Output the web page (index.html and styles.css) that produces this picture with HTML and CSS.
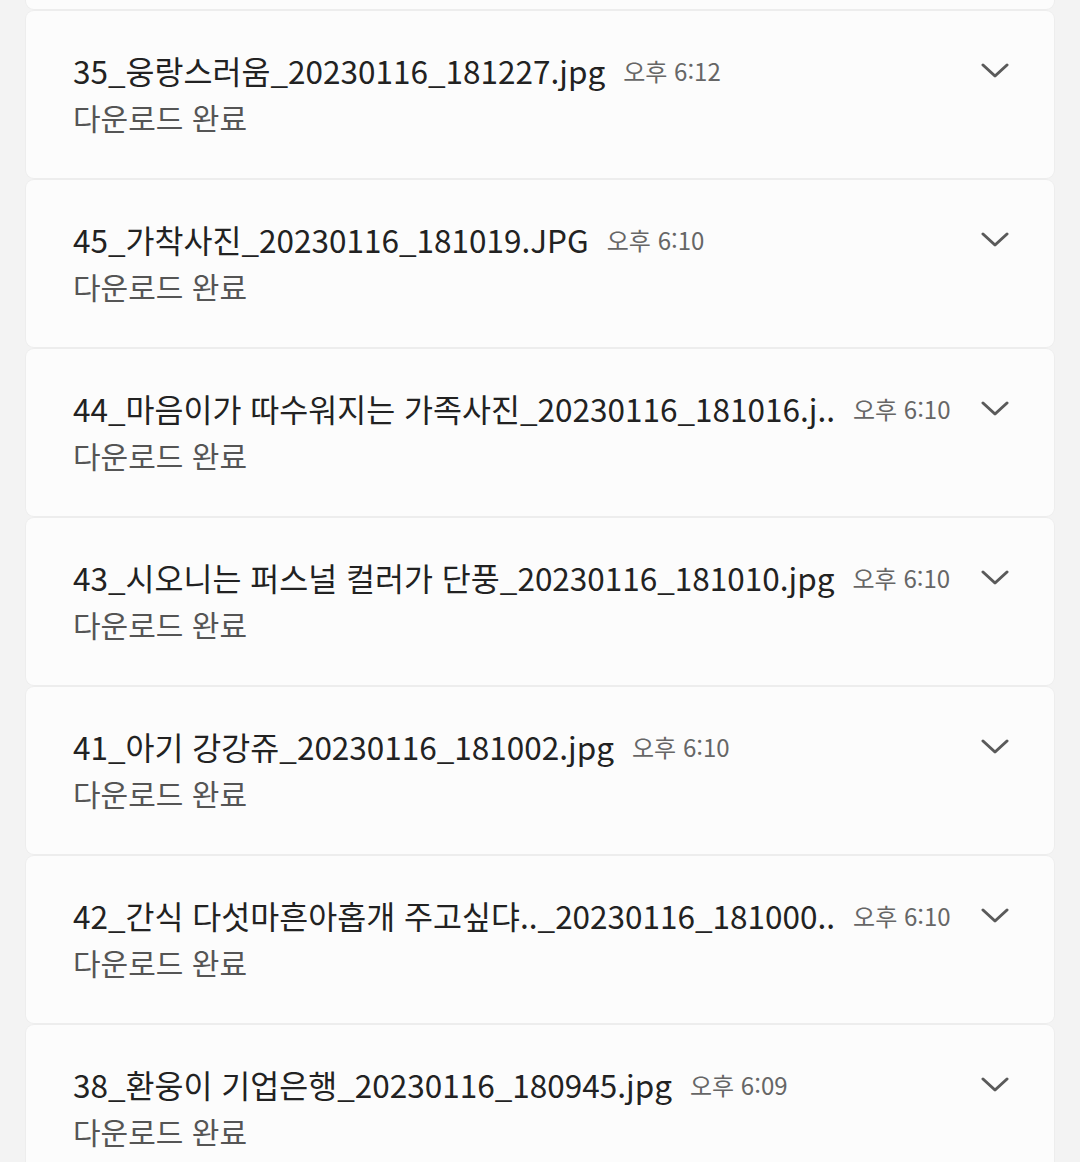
FILE: index.html
```html
<!DOCTYPE html>
<html lang="ko">
<head>
<meta charset="utf-8">
<title>다운로드</title>
<link rel="stylesheet" href="styles.css">
</head>
<body>
<div class="list">
  <div class="card partial"></div>
  <div class="card">
    <div class="row">
      <span class="title">35_웅랑스러움_20230116_181227.jpg</span>
      <span class="time">오후 6:12</span>
      <span class="spacer"></span>
      <svg class="chev" viewBox="0 0 28 16"><path d="M2 2 L14 13 L26 2"/></svg>
    </div>
    <div class="status">다운로드 완료</div>
  </div>
  <div class="card">
    <div class="row">
      <span class="title">45_가착사진_20230116_181019.JPG</span>
      <span class="time">오후 6:10</span>
      <span class="spacer"></span>
      <svg class="chev" viewBox="0 0 28 16"><path d="M2 2 L14 13 L26 2"/></svg>
    </div>
    <div class="status">다운로드 완료</div>
  </div>
  <div class="card">
    <div class="row">
      <span class="title">44_마음이가 따수워지는 가족사진_20230116_181016.j..</span>
      <span class="time">오후 6:10</span>
      <span class="spacer"></span>
      <svg class="chev" viewBox="0 0 28 16"><path d="M2 2 L14 13 L26 2"/></svg>
    </div>
    <div class="status">다운로드 완료</div>
  </div>
  <div class="card">
    <div class="row">
      <span class="title">43_시오니는 퍼스널 컬러가 단풍_20230116_181010.jpg</span>
      <span class="time">오후 6:10</span>
      <span class="spacer"></span>
      <svg class="chev" viewBox="0 0 28 16"><path d="M2 2 L14 13 L26 2"/></svg>
    </div>
    <div class="status">다운로드 완료</div>
  </div>
  <div class="card">
    <div class="row">
      <span class="title">41_아기 강강쥬_20230116_181002.jpg</span>
      <span class="time">오후 6:10</span>
      <span class="spacer"></span>
      <svg class="chev" viewBox="0 0 28 16"><path d="M2 2 L14 13 L26 2"/></svg>
    </div>
    <div class="status">다운로드 완료</div>
  </div>
  <div class="card">
    <div class="row">
      <span class="title">42_간식 다섯마흔아홉개 주고싶댜.._20230116_181000..</span>
      <span class="time">오후 6:10</span>
      <span class="spacer"></span>
      <svg class="chev" viewBox="0 0 28 16"><path d="M2 2 L14 13 L26 2"/></svg>
    </div>
    <div class="status">다운로드 완료</div>
  </div>
  <div class="card">
    <div class="row">
      <span class="title">38_환웅이 기업은행_20230116_180945.jpg</span>
      <span class="time">오후 6:09</span>
      <span class="spacer"></span>
      <svg class="chev" viewBox="0 0 28 16"><path d="M2 2 L14 13 L26 2"/></svg>
    </div>
    <div class="status">다운로드 완료</div>
  </div>
</div>
</body>
</html>
```

FILE: styles.css
```css
html, body {
  margin: 0;
  padding: 0;
  background: #f3f3f3;
  overflow: hidden;
}
body {
  width: 1080px;
  height: 1162px;
  font-family: "Noto Sans CJK KR", "Noto Sans", sans-serif;
}
.list {
  display: flex;
  flex-direction: column;
  gap: 2px;
  padding: 0 26px;
}
.card {
  background: #fcfcfc;
  border-radius: 8px;
  height: 167px;
  box-sizing: border-box;
  padding: 27px 45px 0 47px;
  box-shadow: 0 0 0 1px rgba(0, 0, 0, 0.025);
}
.card.partial {
  height: 9px;
  padding: 0;
  border-radius: 0 0 8px 8px;
}
.row {
  display: flex;
  align-items: center;
  height: 64px;
}
.title {
  font-size: 31.5px;
  color: #222;
  white-space: nowrap;
}
.time {
  font-size: 24px;
  color: #666;
  margin-left: 18px;
  white-space: nowrap;
}
.spacer {
  flex: 1;
  min-width: 28px;
}
.chev {
  flex: none;
  width: 28px;
  height: 16px;
  fill: none;
  stroke: #5a5a5a;
  stroke-width: 3;
  stroke-linecap: round;
  stroke-linejoin: round;
  margin-top: 2px;
}
.status {
  font-size: 30px;
  color: #555;
  margin-top: -5px;
  line-height: 40px;
}
```
